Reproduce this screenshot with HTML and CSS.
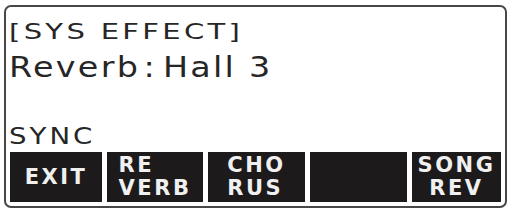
FILE: index.html
```html
<!DOCTYPE html>
<html lang="en">
<head>
  <meta charset="UTF-8">
  <title>SYS EFFECT</title>
  <link rel="stylesheet" href="styles.css">
</head>
<body>
  <div class="lcd">
    <div class="title"><span class="wide">[SYS EFFECT]</span></div>
    <div class="value"><span class="wide">Reverb<span class="colon">:</span>Hall 3</span></div>

    <div class="spacer"></div>

    <div class="label"><span class="wide">SYNC</span></div>
    <div class="keys">
      <div class="key"><span>EXIT</span></div>
      <div class="key"><span>RE<br>VERB</span></div>
      <div class="key"><span>CHO<br>RUS</span></div>
      <div class="key"></div>
      <div class="key center"><span>SONG<br>REV</span></div>
    </div>
  </div>
</body>
</html>
```

FILE: styles.css
```css
body {
  margin: 0;
  background: #fff;
  font-family: 'DejaVu Sans', 'Liberation Sans', sans-serif;
  color: #262626;
}
.lcd {
  box-sizing: border-box;
  width: 503px;
  height: 203px;
  margin: 5px 0 0 4px;
  padding: 13px 3px 4px 3px;
  border: 2px solid #474747;
  border-radius: 7px;
  display: flex;
  flex-direction: column;
}
.wide {
  display: inline-block;
  transform-origin: left center;
}
.title {
  font-size: 22px;
  line-height: 24px;
  letter-spacing: 2.5px;
}
.title .wide {
  transform: scaleX(1.32);
}
.value {
  margin-top: 7px;
  font-size: 29px;
  line-height: 33px;
  letter-spacing: 2px;
}
.value .wide {
  transform: scaleX(1.15);
}
.colon {
  margin: 0 5px 0 3px;
}
.spacer {
  flex: 1;
}
.label {
  font-size: 23px;
  line-height: 25px;
  letter-spacing: 2.5px;
  margin-bottom: 3px;
}
.label .wide {
  transform: scaleX(1.2);
}
.keys {
  display: grid;
  grid-template-columns: 92px 96px 97px 97px 89px;
  gap: 5px;
  height: 50px;
  margin-left: 1px;
}
.key {
  background: #1c1a1b;
  color: #f0f0f0;
  display: flex;
  align-items: center;
  justify-content: center;
  font-weight: bold;
  font-size: 21px;
  line-height: 23px;
  letter-spacing: 2.5px;
}
.key span {
  text-align: left;
}
.key.center span {
  text-align: center;
}
```
